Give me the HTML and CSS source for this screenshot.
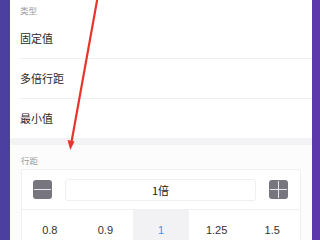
FILE: index.html
```html
<!DOCTYPE html>
<html lang="zh">
<head>
<meta charset="utf-8">
<link rel="stylesheet" href="styles.css">
</head>
<body>
<div class="panel">
  <section class="type">
    <div class="label">类型</div>
    <div class="row">固定值</div>
    <div class="row">多倍行距</div>
    <div class="row last">最小值</div>
  </section>
  <div class="band"></div>
  <section class="spacing">
    <div class="label label2">行距</div>
    <div class="card">
      <div class="stepper">
        <div class="btn minus"><span class="h"></span></div>
        <div class="value">1倍</div>
        <div class="btn plus"><span class="h"></span><span class="v"></span></div>
      </div>
      <div class="presets">
        <div class="cell">0.8</div>
        <div class="cell">0.9</div>
        <div class="cell active">1</div>
        <div class="cell">1.25</div>
        <div class="cell">1.5</div>
      </div>
    </div>
  </section>
</div>
<svg class="arrow" width="320" height="240" viewBox="0 0 320 240">
  <line x1="97.5" y1="-2" x2="71.5" y2="142" stroke="#e8352c" stroke-width="2.2"/>
  <polygon points="67.5,140 74.5,141.5 70.3,150" fill="#e8352c"/>
</svg>
</body>
</html>
```

FILE: styles.css
```css
html, body {
  margin: 0;
  padding: 0;
}
body {
  width: 320px;
  height: 240px;
  overflow: hidden;
  position: relative;
  box-sizing: border-box;
  padding: 0 8px 0 10px;
  background: linear-gradient(90deg, #4b3f9f 0, #4b3f9f 10px, #5a39aa 312px, #5d37ab 320px);
  font-family: "Noto Sans CJK SC", "Noto Sans", sans-serif;
  color: #2a2a2a;
}
.panel {
  background: #fff;
  height: 240px;
  display: flex;
  flex-direction: column;
}
.type {
  flex: none;
  padding-left: 10px;
}
.label {
  height: 19px;
  font-size: 8.5px;
  line-height: 20px;
  color: #9a9a9a;
}
.row {
  height: 40px;
  line-height: 39px;
  font-size: 11px;
  border-bottom: 1px solid #efefef;
  box-sizing: border-box;
}
.row.last {
  border-bottom: none;
  height: 39px;
}
.band {
  flex: none;
  height: 7px;
  background: #f3f3f5;
}
.spacing {
  flex: 1;
  min-height: 0;
  background: #fcfcfc;
  padding: 0 11px;
}
.label2 {
  height: 24px;
  line-height: 30px;
}
.card {
  background: #fff;
  border: 1px solid #f0f0f0;
  border-bottom: none;
}
.stepper {
  height: 39px;
  display: flex;
  align-items: center;
  padding: 0 12px 0 11px;
  border-bottom: 1px solid #f0f0f0;
}
.btn {
  width: 19px;
  height: 19px;
  border-radius: 3px;
  background: #77757e;
  position: relative;
  flex: none;
}
.btn .h {
  position: absolute;
  left: 1px;
  right: 1px;
  top: 9px;
  height: 1px;
  background: #e8e8ea;
}
.btn .v {
  position: absolute;
  top: 1px;
  bottom: 1px;
  left: 9px;
  width: 1px;
  background: #e8e8ea;
}
.value {
  flex: 1;
  margin: 0 13px;
  height: 22px;
  border: 1px solid #efefef;
  border-radius: 3px;
  box-sizing: border-box;
  text-align: center;
  line-height: 21px;
  font-size: 11px;
  color: #222;
}
.presets {
  display: grid;
  grid-template-columns: repeat(5, 1fr);
  height: 40px;
}
.cell {
  text-align: center;
  line-height: 40px;
  font-size: 11px;
  font-family: "Liberation Sans", "Noto Sans", sans-serif;
  color: #333;
}
.cell.active {
  background: #f2f2f4;
  color: #4d8fe3;
}
.arrow {
  position: absolute;
  left: 0;
  top: 0;
}
```
